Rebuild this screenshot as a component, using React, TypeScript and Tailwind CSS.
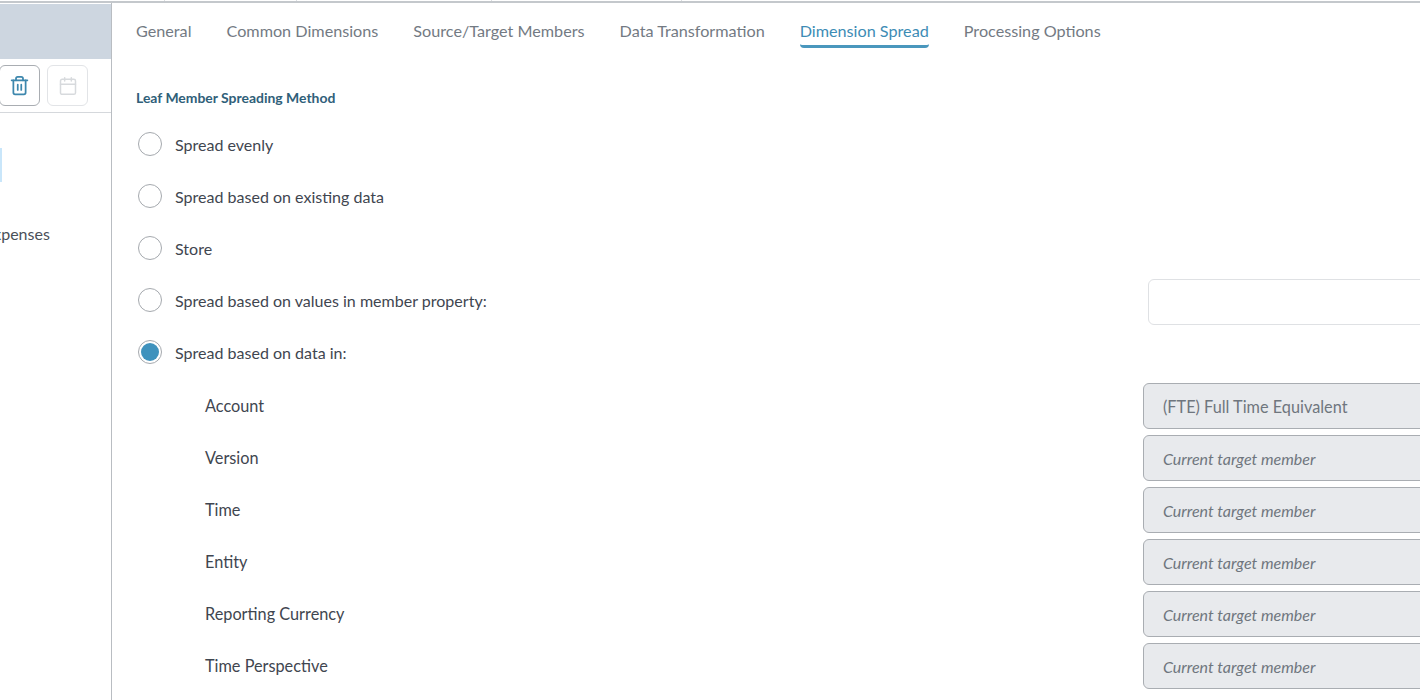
import { Calendar, Trash2 } from 'lucide-react';

const tabs = ['General', 'Common Dimensions', 'Source/Target Members', 'Data Transformation', 'Dimension Spread', 'Processing Options'];
const activeTab = 'Dimension Spread';

const radios = [
    { label: 'Spread evenly' },
    { label: 'Spread based on existing data' },
    { label: 'Store' },
    { label: 'Spread based on values in member property:', input: true },
    { label: 'Spread based on data in:', checked: true },
];

const members = [
    { label: 'Account', value: '(FTE) Full Time Equivalent' },
    { label: 'Version' },
    { label: 'Time' },
    { label: 'Entity' },
    { label: 'Reporting Currency' },
    { label: 'Time Perspective' },
];

const App = () => {
    return (
        <div className="flex h-[700px] w-[1420px] flex-col overflow-hidden bg-white font-['Lato',sans-serif] text-[16px] text-[#3f4650]">
            <div className="flex h-[3px] shrink-0 border-b-2 border-[#c4c8cc]">
                <div className="w-[165px] border-r border-[#dcdfe2]" />
                <div className="w-[132px] border-r border-[#dcdfe2]" />
                <div className="w-[195px] border-r border-[#dcdfe2]" />
                <div className="w-[190px] border-r border-[#dcdfe2]" />
            </div>
            <div className="flex min-h-0 flex-1">
                <aside className="w-[112px] shrink-0 overflow-hidden border-r border-[#b9bdc2] pt-px">
                    <div className="h-[55px] bg-[#cdd6e0]" />
                    <div className="flex h-[54px] items-start gap-[7px] border-b border-[#d5d8dc] pt-[6px]">
                        <button className="flex h-[41px] w-[41px] -ml-px items-center justify-center rounded-md border border-[#a9adb2] text-[#3d87ad]">
                            <Trash2 size={21} strokeWidth={2} />
                        </button>
                        <button className="flex h-[41px] w-[41px] items-center justify-center rounded-md border border-[#e2e4e7] text-[#d7dadd]">
                            <Calendar size={20} strokeWidth={1.8} />
                        </button>
                    </div>
                    <div className="mt-[35px] h-[34px] w-[2px] bg-[#c9e6fa]" />
                    <div className="mt-[42px] -ml-[16px] whitespace-nowrap text-[16px] leading-5 text-[#4a5058]">Expenses</div>
                </aside>
                <main className="min-w-0 flex-1 overflow-hidden pl-[24px]">
                    <nav className="flex h-[45px] gap-[35px] pt-[15px] text-[16.2px]">
                        {tabs.map((tab) => (
                            <div
                                key={tab}
                                className={
                                    tab === activeTab
                                        ? 'h-[30px] whitespace-nowrap rounded-b-sm border-b-[3px] border-[#4a97bd] leading-[26px] text-[#3d8cb5]'
                                        : 'h-[30px] whitespace-nowrap leading-[26px] text-[#737a83]'
                                }
                            >
                                {tab}
                            </div>
                        ))}
                    </nav>
                    <h2 className="mt-[40px] h-[20px] text-[13.95px] font-bold leading-5 text-[#2f6079]">Leaf Member Spreading Method</h2>
                    <div className="mt-[11px]">
                        {radios.map((radio) => (
                            <div key={radio.label} className="flex h-[52px] items-center">
                                <div className="ml-[2px] flex w-[37px] shrink-0 -translate-y-px">
                                    <span className="flex h-6 w-6 items-center justify-center rounded-full border border-[#a5a9ae] bg-white">
                                        {radio.checked && <span className="h-[18px] w-[18px] rounded-full bg-[#3f92bd]" />}
                                    </span>
                                </div>
                                <span className="whitespace-nowrap text-[16.05px]">{radio.label}</span>
                                {radio.input && (
                                    <div className="ml-auto -mr-[20px] h-[46px] w-[292px] shrink-0 translate-y-px rounded-md border border-[#dfe1e4] bg-white" />
                                )}
                            </div>
                        ))}
                        {members.map((member) => (
                            <div key={member.label} className="flex h-[52px] items-center">
                                <span className="translate-y-px whitespace-nowrap pl-[69px] text-[16.3px]">{member.label}</span>
                                <div className="ml-auto -mr-[20px] flex h-[46px] w-[297px] shrink-0 translate-y-px items-center rounded-md border border-[#a9adb2] bg-[#e8eaed] pl-[19px] pt-[2px] text-[#6f767e]">
                                    {member.value ? (
                                        <span className="text-[16.3px]">{member.value}</span>
                                    ) : (
                                        <span className="italic">Current target member</span>
                                    )}
                                </div>
                            </div>
                        ))}
                    </div>
                </main>
            </div>
        </div>
    );
};

export default App;
